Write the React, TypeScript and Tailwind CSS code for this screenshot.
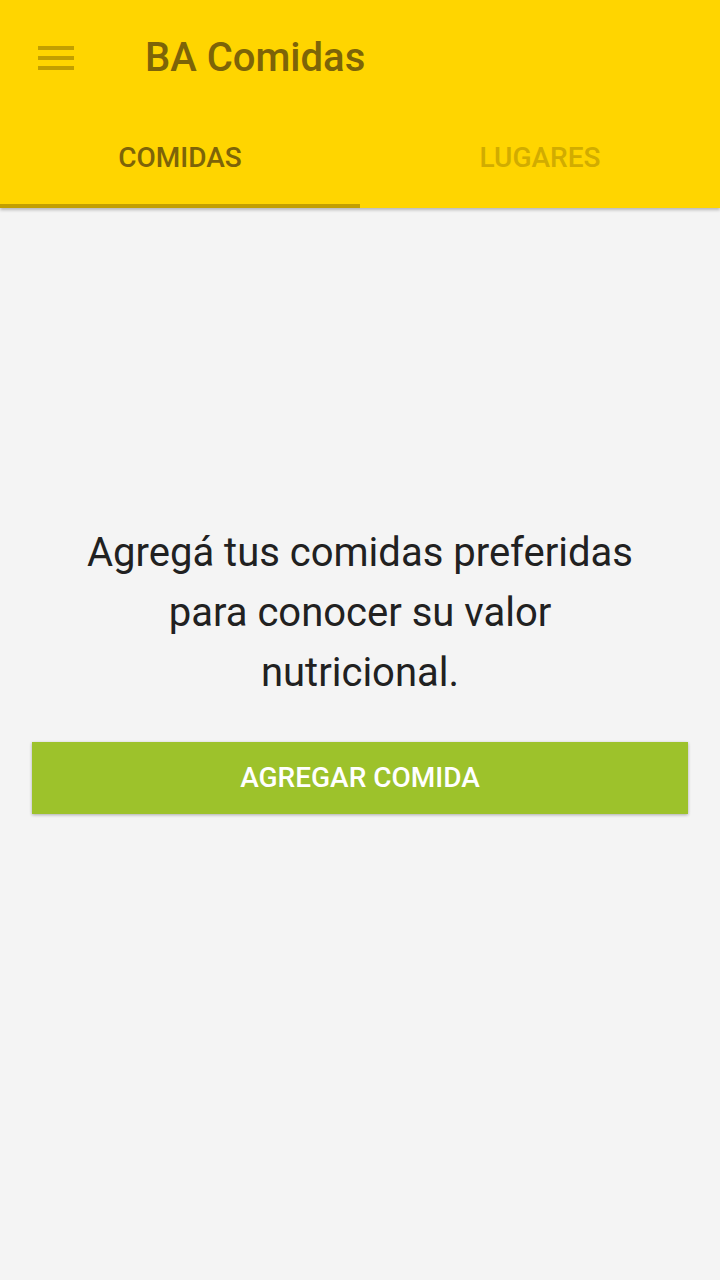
import { useState } from "react";

const MenuIcon = () => {
  return (
    <svg width="36" height="24" viewBox="0 0 36 24" className="block">
      <rect x="0" y="0" width="36" height="4" fill="#c29f00" />
      <rect x="0" y="10" width="36" height="4" fill="#c29f00" />
      <rect x="0" y="20" width="36" height="4" fill="#c29f00" />
    </svg>
  );
};

const App = () => {
  const [tab, setTab] = useState(0);
  const tabs = ["COMIDAS", "LUGARES"];

  return (
    <div className="w-[720px] h-[1280px] flex flex-col bg-[#f4f4f4] font-['Roboto',sans-serif] overflow-hidden">
      {/* Header */}
      <div className="bg-[#ffd500] shadow-[0_2px_3px_rgba(0,0,0,0.25)] relative z-10">
        {/* Toolbar */}
        <div className="h-[112px] flex items-center pt-[4px]">
          <div className="w-[145px] pl-[38px] flex items-center">
            <MenuIcon />
          </div>
          <h1 className="text-[40px] font-medium text-[#7d6408] leading-none">BA Comidas</h1>
        </div>

        {/* Tabs */}
        <div className="flex h-[96px]">
          {tabs.map((t, i) => (
            <button
              key={t}
              onClick={() => setTab(i)}
              className={
                i === tab
                  ? "flex-1 flex items-center justify-center text-[28px] font-medium text-[#7d6408] border-b-4 border-[#c29f00]"
                  : "flex-1 flex items-center justify-center text-[28px] font-medium text-[#d1ac00] border-b-4 border-transparent"
              }
            >
              {t}
            </button>
          ))}
        </div>
      </div>

      {/* Empty state */}
      <div className="flex-1 flex flex-col items-center pt-[315px] px-[32px]">
        <p className="text-[40px] leading-[60px] text-[#212121] text-center w-[570px]">
          Agregá tus comidas preferidas para conocer su valor nutricional.
        </p>
        <button className="mt-[39px] w-full h-[72px] bg-[#9dc22b] text-white text-[28px] font-medium shadow-[0_1px_3px_rgba(0,0,0,0.3)]">
          AGREGAR COMIDA
        </button>
      </div>
    </div>
  );
};

export default App;
